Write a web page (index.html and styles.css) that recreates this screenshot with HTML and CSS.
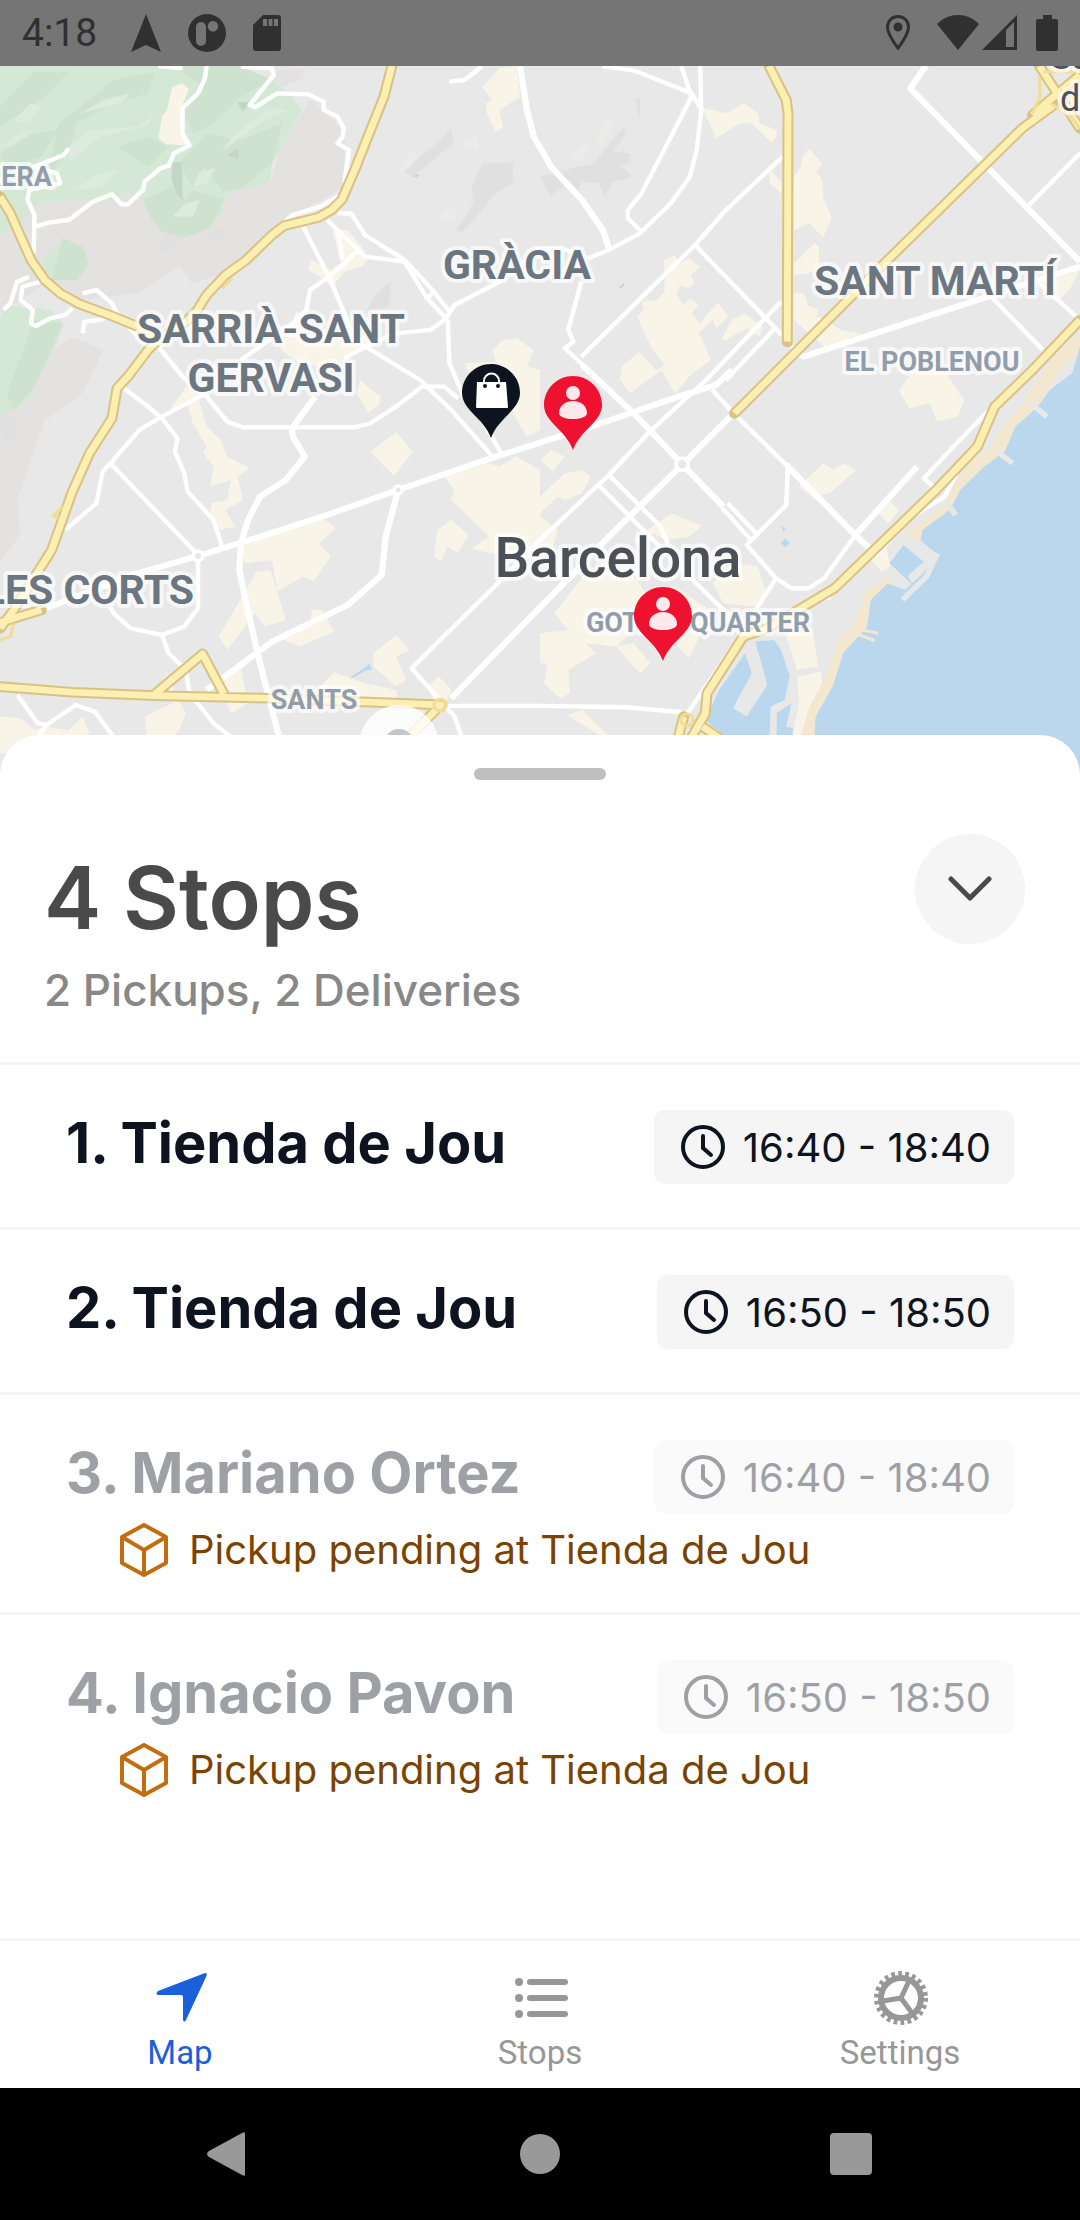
FILE: index.html
```html
<!DOCTYPE html>
<html lang="en">
<head>
<meta charset="utf-8">
<meta name="viewport" content="width=device-width, initial-scale=1">
<title>Stops</title>
<link rel="stylesheet" href="styles.css">
</head>
<body>
<header class="status">
  <time class="status-time">4:18</time>
  <div class="status-left">
    <svg width="30" height="38" viewBox="0 0 30 38"><path d="M15 0L30 38L15 31L0 38Z"/></svg>
    <svg width="38" height="38" viewBox="0 0 38 38"><path fill-rule="evenodd" d="M19 0a19 19 0 1 1 0 38a19 19 0 1 1 0-38ZM8 13v14a5 5 0 0 0 10 0V13a5 5 0 0 0-10 0ZM25 7a5 5 0 1 0 0 10.500a5 5 0 1 0 0-10.500Z"/></svg>
    <svg width="28" height="36" viewBox="0 0 28 36"><path fill-rule="evenodd" d="M10 0H25a3 3 0 0 1 3 3V33a3 3 0 0 1-3 3H3a3 3 0 0 1-3-3V10ZM10 4v7h4V4ZM15.500 4v7h4V4ZM21 4v7h4V4Z"/></svg>
  </div>
  <div class="status-right">
    <svg class="status-pin" width="24" height="36" viewBox="0 0 24 36"><path d="M12 1.500c-6 0-10.500 4.500-10.500 10.500C1.500 20 12 33 12 33S22.500 20 22.500 12C22.500 6 18 1.500 12 1.500Z" fill="none" stroke="#303030" stroke-width="3"/><circle cx="12" cy="12" r="4.500"/></svg>
    <svg width="42" height="36" viewBox="0 0 42 36"><path d="M0 9C12-3 30-3 42 9L21 35Z"/></svg>
    <svg width="35" height="36" viewBox="0 0 35 36"><path fill-rule="evenodd" d="M0 35L35 0V35ZM24 15V32H32V7Z"/></svg>
    <svg class="status-battery" width="22" height="36" viewBox="0 0 22 36"><path d="M7 0h9v4h4a2 2 0 0 1 2 2V34a2 2 0 0 1-2 2H2a2 2 0 0 1-2-2V6a2 2 0 0 1 2-2H7Z"/></svg>
  </div>
</header>

<svg class="map" viewBox="0 66 1080 709" preserveAspectRatio="xMidYMin slice" role="img" aria-label="Map of Barcelona">
  <rect y="66" width="1080" height="800" fill="#e8e8e8"/>
  <g transform="scale(.3444 .3333)">
    <g class="hill">
      <path d="M60 640L110 610L370 580L415 600L700 566L790 540L810 440L860 370L960 350L1000 400L1000 560L830 660L650 820L560 850L520 800L400 880L240 900L150 840L60 900L0 940V700Z"/>
      <path d="M790 240L800 210L885 204L880 235L820 260ZM860 370L900 300L960 350L940 420L860 480L820 500ZM0 1245L60 1220L140 1060L210 1010L300 1050L240 1180L130 1260L50 1500L60 1600L0 1690Z"/>
    </g>
    <g class="facet">
      <path d="M1165 505L1215 475L1275 425L1310 385L1315 430L1270 470L1235 500L1195 530ZM1370 560L1400 490L1490 488L1490 545L1430 590L1380 655L1340 698L1325 690L1375 610ZM1725 490L1810 380L1818 400L1780 455L1830 460V485L1798 500L1830 520L1830 535L1780 545L1755 590L1740 550L1690 545L1675 575L1655 540L1600 590L1568 530L1640 510ZM1843 300L1860 290L1858 360ZM1085 890L1135 840L1130 920L1065 930Z"/>
      <path d="M370 670L400 635L395 660ZM450 740L520 660L550 690L490 760ZM600 700L650 680L640 740ZM0 1240L45 1255L40 1330L0 1310Z"/>
    </g>
    <path class="facet-light" d="M1655 480L1710 420L1698 478ZM1738 400L1760 355L1780 375L1745 455ZM1150 525L1190 450L1218 470L1180 510ZM1275 640L1325 625L1320 655L1278 660ZM1340 430L1390 395L1388 450Z"/>
    <g class="park">
      <path d="M0 198H700L790 240L840 280L878 330L830 420L790 490L785 540L750 562L700 566L655 590L640 650L610 685L540 712L470 695L435 650L415 600L370 580L300 612L230 598L110 610L70 665L0 705Z"/>
      <path d="M182 713L240 740L257 790L220 840L140 843L122 780ZM0 950L20 915L150 930L183 970L160 1040L100 1160L60 1220L0 1245Z"/>
    </g>
    <path class="park-dark" d="M170 370L330 240L450 215L430 280L330 310L220 370L210 420L130 560L160 420ZM500 198H690L790 240L700 290L620 370L560 400L530 330L590 260ZM0 320L100 215L200 215L120 300L0 380ZM0 460L90 400L170 390L120 470L20 500ZM520 490L600 400L700 420L820 370L790 490L700 566L650 575L590 500L560 560ZM415 600L500 560L540 600L560 570L650 600L610 685L540 712L470 695L435 650ZM340 440L430 410L490 440L430 500ZM182 713L240 740L257 790L225 840L150 840ZM20 1180L100 960L183 970L100 1160L40 1230Z"/>
    <path class="park-light" d="M235 340L300 300L380 280L350 310ZM200 440L260 390L400 380L440 350L430 375L290 410L200 490ZM40 360L90 310L120 320L80 370ZM640 460L680 405L780 325L840 330L770 360L700 410ZM210 570L290 520L340 510L300 560ZM500 650L540 610L580 600L560 650ZM0 440L70 390L100 395L30 440ZM560 560L580 515L625 505L600 550Z"/>
    <path class="park-deep" d="M500 484L528 488L530 600L512 580L498 540ZM660 465L692 445V478ZM688 305H725L705 335Z"/>
    <g class="built">
      <path d="M500 260L530 250L548 268L528 320L530 400L550 437L480 432L460 415L470 350L485 330Z"/>
      <path d="M1450 205L1500 198L1510 290L1450 330L1460 385L1440 395L1415 345L1410 310L1430 300L1400 262ZM2040 325L2110 340L2160 310L2200 340L2205 370L2255 390L2255 410L2240 428L2180 366L2140 375L2080 415ZM2330 470L2350 447L2388 490L2370 515L2388 540L2390 590L2415 655L2390 712L2350 670L2305 690V530L2325 500ZM2235 510L2270 545V582L2235 550ZM2305 790L2365 730L2378 740L2378 800L2350 820L2305 825ZM2305 880L2335 880L2345 915L2375 930L2370 950L2395 955L2440 990L2500 1000L2400 1045L2370 1020L2305 960Z"/>
      <path d="M965 690L1010 690L1050 740L1068 780L1050 800L1000 815L965 860L930 830L895 810L905 780L960 810L990 790ZM860 935L880 940L900 1000L1060 1010L1070 1040L960 1105L870 1090L815 1050ZM1430 1050L1460 1020L1500 1015L1550 1050L1530 1100L1568 1110L1568 1290L1530 1310L1500 1260L1460 1180L1360 1120L1350 1090L1440 1085Z"/>
      <path d="M1928 780L1960 765L1975 790L2000 775L2033 800L2005 825L2018 850L2000 865L1975 855L1965 885L1985 915L2005 895L2028 915L2008 940L2030 970L2085 908L2115 950L2080 985L2068 960L2030 1000L2065 1080L2010 1120L1960 1180L1920 1110L1830 1180L1800 1140L1805 1100L1855 1055L1905 1110L1930 1095L1890 1040L1850 950L1870 925L1865 905L1905 900L1930 875ZM2095 1020L2125 960L2160 940L2215 980L2205 1010L2170 985L2140 1000L2110 1020Z"/>
      <path d="M485 1240L540 1160L575 1190L600 1280L640 1320L660 1370L725 1405L690 1430L705 1500L655 1530L682 1580L640 1590L610 1540L615 1510L660 1500L670 1440L610 1460L620 1400L590 1360L600 1340L560 1270L545 1215ZM1035 1180L1045 1140L1105 1190L1100 1215L1070 1237ZM1075 1355L1150 1298L1198 1355L1145 1428ZM700 1625L800 1600L930 1550L975 1585L925 1630L960 1670L910 1745L880 1730L805 1775L790 1680L710 1690ZM745 1715L785 1710L830 1860L770 1880L740 1840L660 1950L635 1910ZM800 1910L900 1880L905 1830L935 1830L970 1895L870 1940ZM1260 1670L1270 1590L1310 1560L1360 1605L1330 1660L1300 1640L1280 1685ZM1290 1430L1420 1390L1450 1400L1500 1370L1568 1410V1680L1420 1660L1370 1645L1420 1610L1310 1500L1320 1470Z"/>
      <path d="M1085 1960L1150 1905L1190 1950L1150 1970L1180 2040L1150 2060L1085 2000ZM1240 2060L1275 2030L1310 2070L1280 2140ZM930 2060L970 2018L1060 2050L1150 2070L1160 2130L930 2100ZM640 2060L700 1980L750 1960L700 2010L720 2110L670 2140ZM420 2150L500 2110L480 2010L510 2080L540 2140L520 2190L480 2240H430ZM0 2150L60 2155L100 2190L130 2180L200 2190L240 2150L260 2200L200 2260H0Z"/>
      <path d="M2610 1170L2640 1130L2600 1110H2740L2800 1200L2780 1250L2720 1265L2700 1210L2640 1225ZM1570 1380L1600 1350L1640 1370L1605 1415ZM1568 1490L1640 1420L1690 1410L1715 1430L1690 1480L1640 1500L1620 1490L1568 1540ZM1568 1550L1620 1590L1600 1660L1568 1670ZM1840 1620L1950 1540L2038 1578L2000 1610L1930 1620L1900 1600L1850 1640ZM2070 1750L2130 1690L2200 1700L2228 1790L2190 1820L2100 1810ZM1610 1840L1700 1720L1800 1700L1850 1740L1880 1790L1960 1760L2060 1830L2050 1870L2000 1975L1960 1930L1920 1900L1850 1880L1790 1940L1700 1930L1730 1960L1650 2010L1655 2080L1625 2095L1580 2050L1590 1990L1568 1990V1900L1650 1890ZM1790 1940L1840 1930L1888 1990L1860 2020L1830 1990ZM2320 1460L2390 1390L2420 1410L2450 1390L2485 1410L2410 1480L2370 1488L2415 1520V1535L2380 1510ZM2540 1530L2570 1490L2610 1530L2580 1570ZM2510 1660L2570 1620L2585 1700L2560 1715ZM2280 1900L2360 1890L2375 2000L2315 2010ZM2315 2030L2385 2015L2390 2090L2340 2210H2300L2320 2110ZM1645 2145L1690 2130L1765 2205H1740ZM3050 840L3136 810L3110 860L3070 910Z"/>
    </g>
    <path class="beach" d="M3136 1020L3070 1090L3030 1150L2990 1220L2930 1290L2890 1360L2830 1400L2790 1460L2755 1530L2690 1580L2640 1610M2590 1745L2530 1790L2500 1880L2450 1940L2410 2050L2368 2130L2340 2230"/>
    <g class="water">
      <path d="M3136 1040L3113 1120L3048 1170L3013 1220L2948 1280L2918 1355L2858 1400L2788 1470L2758 1530L2678 1590L2673 1620L2722 1665L2680 1720L2628 1770L2578 1750L2528 1800L2518 1880L2448 1960L2418 2060L2368 2150L2355 2400H3136Z"/>
      <path d="M2193 1925L2248 1920L2268 1950L2293 2030L2278 2100L2238 2120L2233 2240H2140L2048 2160L2088 2070L2163 1960L2183 2020L2128 2125L2168 2150L2228 2055ZM2255 2140L2298 2110L2283 2180L2303 2185L2298 2240H2255ZM2583 1690L2623 1635L2688 1690L2638 1730L2650 1755ZM2268 1630L2280 1615L2293 1630L2280 1642ZM2270 1580L2280 1585L2275 1595ZM1018 2032L1066 1998L1072 1990L1080 2010L1064 2010L1020 2036ZM1200 530L1205 522L1220 524L1210 532ZM1797 860L1812 850V858L1802 866Z"/>
    </g>
    <path class="pier" d="M2890 1350L2940 1390M2992 1210L3040 1250M2750 1510L2775 1545M2722 1660L2690 1730L2620 1800M2690 1690L2640 1735M2640 1620L2720 1670"/>
    <path class="beach thin" d="M2480 1885L2550 1900M2470 1895L2540 1922"/>
    <g class="road">
      <path d="M600 198L595 235L575 280L530 325V400L550 437L505 460L490 497L465 505L420 545L415 570L372 613H352L325 583L270 605L200 660L140 668L105 680M700 200L790 205L795 225L725 315L740 322L805 280L895 283L940 305V330L980 350L998 385L995 410L980 430L1013 450L1000 550M200 445L185 465L100 500L165 520L175 550L85 570L80 600L100 645L98 760M10 930L30 910L50 845L85 830M120 845L65 860L60 900L95 930L90 970L105 978L145 955L190 945L210 925M240 880L280 870L325 910L345 950L420 1030M240 1000L245 965L290 960L340 935M460 198L530 205"/>
      <path d="M800 690L850 645L930 620L990 585M880 680L955 830L1000 940L1030 1025L1070 1045L1220 1140L1310 1230L1430 1370M950 660L980 690L995 780M980 640L1020 640L1060 705L1175 780L1260 875L1305 935M980 690L1060 770L1175 785L1240 895L1300 960M1240 895L1265 870M1040 750L990 800L955 830L900 870L890 930L850 970L700 1080M1000 1075L1070 1035L1150 1000L1250 990L1290 960L1320 915L1460 840L1568 745H1630L1708 775M1300 960L1305 1090L1350 1200L1400 1260L1455 1360M460 1040L530 1130L600 1190L660 1265L705 1282H1030L1075 1270L1150 1220L1225 1160L1290 1160L1330 1195"/>
      <path d="M360 1165L430 1220L470 1255L515 1315L508 1355L535 1420L545 1475L620 1560L645 1640M590 1185L470 1250L405 1290L325 1385L298 1415L280 1510L190 1590M325 1395L575 1665V1825L535 1880L470 1905L380 1885L330 1840L310 1800M470 1905L490 1960L540 2010L550 2080L620 2170L700 2235M50 2085L110 2170L135 2175L220 2115L275 2135L350 2240M135 2175L100 2230"/>
      <path d="M1455 1740L1195 2005L1320 2150L1350 2240M1568 1820L1310 2095M1455 1740L1568 1620L1768 1425L1885 1297L2050 1140L2268 905M2108 1140L2250 985M1738 1455L2060 1790L2150 1880M1768 1425L1918 1580L1943 1640M2068 1170L2130 1240L2288 1400M2288 1390L2283 1515L2168 1635L2253 1735L2298 1765H2348L2393 1735L2488 1600M2253 1735L2188 1840M2098 1525L2180 1620M2113 1510L2200 1605M2968 1130L2768 1340L2683 1435L2710 1460M2778 1420L2743 1490L2648 1550L2540 1670M2128 1940L2023 2100L1990 2150M2410 1790L2300 1830M1300 2118H1568L1818 2122L1978 2137"/>
      <path d="M1748 198L1843 212L2008 280L2038 330M1978 198L2008 290L1863 580L1823 630V655L1858 690M2033 198L2036 330L2023 450L2003 530L1948 610L1858 700L1768 750L1708 775M2273 470L2108 630L2018 735L1688 1070M2018 735L2270 1005M1688 845L1650 990L1665 1025L1640 1045L1740 1140M1400 198L1350 240L1305 245M3136 460L2988 615M2878 890L3028 1050M3018 850L3136 960"/>
    </g>
    <g class="road wide">
      <path d="M120 1830L400 1720L575 1668L710 1625L955 1543L1155 1470L1440 1370L1568 1328L1745 1270L1970 1190L2080 1155L2125 1110M915 1190L848 1285L850 1310L885 1370L830 1440L755 1490L720 1560L700 1630L695 1710L715 1810L750 1970L815 2230M1155 1475L1120 1610L1108 1725L1010 1815L790 1925L600 2070M1310 2095L1670 1715L1768 1610L1975 1400L2130 1240M1690 1095L1840 1240L1981 1393L2100 1520M2288 1400L2488 1610L2530 1650M2488 1600L2663 1400"/>
      <path d="M1510 198L1530 330L1550 410L1600 500L1690 600L1750 690L1770 750M2688 198L2643 265L2818 450L3136 785M2300 1040L2333 1070L2868 890L3136 800"/>
    </g>
    <circle class="ring" cx="1981" cy="1393" r="18"/>
    <circle class="ring" cx="575" cy="1668" r="14"/>
    <circle class="ring" cx="1156" cy="1470" r="12"/>
    <g class="highway casing">
      <path d="M0 590L30 640L60 710L90 780L130 840L175 880L230 912L330 950L400 980L450 1015M1138 198L1115 290L1070 405L1030 510L993 598L965 628L925 652L825 677L790 705L715 780L655 825L600 885L570 935L540 965L460 1020L430 1050L375 1125L340 1165L325 1255L260 1360L210 1475L150 1650L95 1740L40 1830L0 1885M0 1868L120 1830M0 2060L210 2077L450 2087L780 2095L1280 2115L1180 2220M450 2082L588 1962L650 2082"/>
      <path d="M2233 198L2283 300L2288 340L2286 1025M3060 315L2968 385L2558 800L2133 1240M3018 198L3136 385M3136 225L3060 290L2998 345M3136 960L2998 1110L2888 1220L2838 1340L2718 1470L2498 1690L2423 1765L2228 1885L2158 1910L2053 2080L2048 2140L1998 2230M1985 2150L1965 2230M2040 2180L2110 2230"/>
    </g>
    <g class="highway">
      <path d="M0 590L30 640L60 710L90 780L130 840L175 880L230 912L330 950L400 980L450 1015M1138 198L1115 290L1070 405L1030 510L993 598L965 628L925 652L825 677L790 705L715 780L655 825L600 885L570 935L540 965L460 1020L430 1050L375 1125L340 1165L325 1255L260 1360L210 1475L150 1650L95 1740L40 1830L0 1885M0 1868L120 1830M0 2060L210 2077L450 2087L780 2095L1280 2115L1180 2220M450 2082L588 1962L650 2082"/>
      <path d="M2233 198L2283 300L2288 340L2286 1025M3060 315L2968 385L2558 800L2133 1240M3018 198L3136 385M3136 225L3060 290L2998 345M3136 960L2998 1110L2888 1220L2838 1340L2718 1470L2498 1690L2423 1765L2228 1885L2158 1910L2053 2080L2048 2140L1998 2230M1985 2150L1965 2230M2040 2180L2110 2230"/>
    </g>
    <g class="ramp">
      <path d="M3018 230L3020 290L2998 340M3050 310L3110 350L3136 385M3080 270L3136 310M3030 215L3136 215M0 1920L30 1910L40 1870M180 1520L155 1548L170 1555M675 835L645 865"/>
      <circle cx="1278" cy="2115" r="18"/>
      <circle cx="1995" cy="2160" r="18"/>
    </g>
  </g>

  <circle cx="399" cy="745" r="40" fill="#fff" fill-opacity=".8"/>
  <circle cx="399" cy="744" r="15" fill="#c4c6c7"/>

  <g class="label city"><text x="618" y="577">Barcelona</text></g>
  <g class="label district">
    <text x="517" y="279">GRÀCIA</text>
    <text x="271" y="343">SARRIÀ-SANT</text>
    <text x="271" y="392">GERVASI</text>
    <text x="935" y="295">SANT MARTÍ</text>
    <text class="ends" x="194" y="604">LES CORTS</text>
  </g>
  <g class="label quarter">
    <text x="932" y="371">EL POBLENOU</text>
    <text x="698" y="632">GOTHIC QUARTER</text>
    <text x="314" y="709">SANTS</text>
    <text class="ends" x="52" y="186">VALLVIDRERA</text>
  </g>
  <g class="label town">
    <text x="1050" y="69">Santa Coloma</text>
    <text x="1060" y="111">de Gramenet</text>
  </g>

  <g transform="translate(462 364)">
    <path d="M29 0C13 0 0 13 0 29C0 46 22 54 29 74C36 54 58 46 58 29C58 13 45 0 29 0Z" fill="#0d131f"/>
    <path d="M15 18H44L46 43Q46 44 45 44H15Q14 44 14 43Z" fill="#fff"/>
    <path d="M22 21V17A7 7 0 0 1 37 17V21" fill="none" stroke="#fff" stroke-width="2"/>
    <circle cx="23" cy="22" r="2" fill="#0d131f"/><circle cx="36" cy="22" r="2" fill="#0d131f"/>
  </g>
  <g transform="translate(544 376)">
    <path d="M29 0C13 0 0 13 0 29C0 46 22 54 29 74C36 54 58 46 58 29C58 13 45 0 29 0Z" fill="#ef1230"/>
    <circle cx="29" cy="17" r="7" fill="#fde8eb"/>
    <path d="M15 37C15 30 21 25 29 25S43 30 43 37C43 41 36 43 29 43S15 41 15 37Z" fill="#fde8eb"/>
  </g>
  <g transform="translate(634 587)">
    <path d="M29 0C13 0 0 13 0 29C0 46 22 54 29 74C36 54 58 46 58 29C58 13 45 0 29 0Z" fill="#ef1230"/>
    <circle cx="29" cy="17" r="7" fill="#fde8eb"/>
    <path d="M15 37C15 30 21 25 29 25S43 30 43 37C43 41 36 43 29 43S15 41 15 37Z" fill="#fde8eb"/>
  </g>
</svg>

<main class="sheet">
  <div class="handle"></div>
  <div class="sheet-head">
    <div>
      <h1>4 Stops</h1>
      <p>2 Pickups, 2 Deliveries</p>
    </div>
    <button class="collapse" type="button" aria-label="Collapse">
      <svg width="44" height="26" viewBox="0 0 44 26"><path d="M3 3L22 22L41 3" fill="none" stroke="#4a4a4a" stroke-width="5" stroke-linecap="round" stroke-linejoin="round"/></svg>
    </button>
  </div>
  <ol class="stops">
    <li class="stop">
      <div class="stop-row">
        <h2>1. Tienda de Jou</h2>
        <span class="slot"><svg width="44" height="44" viewBox="0 0 44 44"><circle cx="22" cy="22" r="20"/><path d="M22 11V23L30 30"/></svg>16:40 - 18:40</span>
      </div>
    </li>
    <li class="stop">
      <div class="stop-row">
        <h2>2. Tienda de Jou</h2>
        <span class="slot"><svg width="44" height="44" viewBox="0 0 44 44"><circle cx="22" cy="22" r="20"/><path d="M22 11V23L30 30"/></svg>16:50 - 18:50</span>
      </div>
    </li>
    <li class="stop">
      <div class="stop-row waiting">
        <h2>3. Mariano Ortez</h2>
        <span class="slot"><svg width="44" height="44" viewBox="0 0 44 44"><circle cx="22" cy="22" r="20"/><path d="M22 11V23L30 30"/></svg>16:40 - 18:40</span>
      </div>
      <p class="pending"><svg width="48" height="54" viewBox="0 0 48 54"><path d="M24 2L46 14V40L24 52L2 40V14ZM2 14L24 27L46 14M24 27V52"/></svg>Pickup pending at Tienda de Jou</p>
    </li>
    <li class="stop">
      <div class="stop-row waiting">
        <h2>4. Ignacio Pavon</h2>
        <span class="slot"><svg width="44" height="44" viewBox="0 0 44 44"><circle cx="22" cy="22" r="20"/><path d="M22 11V23L30 30"/></svg>16:50 - 18:50</span>
      </div>
      <p class="pending"><svg width="48" height="54" viewBox="0 0 48 54"><path d="M24 2L46 14V40L24 52L2 40V14ZM2 14L24 27L46 14M24 27V52"/></svg>Pickup pending at Tienda de Jou</p>
    </li>
  </ol>
</main>

<nav class="tabs">
  <a class="tab active" href="#map"><svg width="56" height="56" viewBox="0 0 56 56"><path d="M53 3Q56 3 54 7L34 50Q32 53 31 50V27Q31 25 29 25H6Q3 24 6 21Z"/></svg>Map</a>
  <a class="tab" href="#stops"><svg width="56" height="56" viewBox="-2 0 56 56"><circle cx="5" cy="12" r="4"/><circle cx="5" cy="28" r="4"/><circle cx="5" cy="44" r="4"/><path d="M16 12H51M16 28H51M16 44H51" fill="none" stroke="#979797" stroke-width="6" stroke-linecap="round"/></svg>Stops</a>
  <a class="tab" href="#settings"><svg width="56" height="56" viewBox="-29 -28 56 56"><g fill="none" stroke="#979797"><circle r="20" stroke-width="6"/><circle r="24.500" stroke-width="5" stroke-dasharray="3.700 3.297"/><path d="M0 0L8 -17M0 0L-18 3M0 0L11 15" stroke-width="5"/></g></svg>Settings</a>
</nav>

<footer class="system">
  <button type="button" aria-label="Back"><svg width="42" height="46" viewBox="0 0 42 46"><path d="M39 3V43Q39 46 36 44L3 26Q-1 23 3 20L36 2Q39 0 39 3Z"/></svg></button>
  <button type="button" aria-label="Home"><svg width="42" height="42" viewBox="0 0 42 42"><circle cx="22" cy="21" r="20"/></svg></button>
  <button type="button" aria-label="Recents"><svg width="42" height="42" viewBox="0 0 42 42"><rect width="42" height="42" rx="4"/></svg></button>
</footer>
</body>
</html>
```
FILE: styles.css
```css
* { box-sizing: border-box; }
body {
  margin: 0;
  min-height: 100vh;
  display: flex;
  flex-direction: column;
  background: #fff;
  font-family: Inter, "Liberation Sans", sans-serif;
  color: #0d131f;
}
h1, h2, p, ol { margin: 0; padding: 0; }
button { border: 0; padding: 0; }
svg { display: block; flex: none; }

.status {
  height: 66px;
  padding: 0 22px;
  display: flex;
  align-items: center;
  background: #757575;
  color: #303030;
  font-family: Roboto, sans-serif;
}
.status svg { fill: #303030; }
.status-time { font-size: 39px; margin-right: 34px; }
.status-left, .status-right { display: flex; align-items: center; }
.status-left { gap: 27px; }
.status-right { margin-left: auto; gap: 3px; }
.status-pin { margin-right: 24px; }
.status-battery { margin-left: 16px; }

.map { width: 100%; flex: 1 1 0; min-height: 400px; }
.hill { fill: #e4e2e1; }
.facet { fill: #e0e0e0; }
.facet-light { fill: #ebebe9; }
.park { fill: #d5e8d6; }
.park-dark { fill: #cfe2d0; }
.park-light { fill: #dcebdd; }
.park-deep { fill: #c4d6c6; }
.built { fill: #f8f4e7; }
.water { fill: #bad7ed; }
.beach { fill: none; stroke: #f3e8cf; stroke-width: 40; }
.beach.thin { stroke-width: 9; }
.pier { fill: none; stroke: #e8e8e8; stroke-width: 16; }
.road { fill: none; stroke: #fff; stroke-width: 13; stroke-linejoin: round; }
.road.wide { stroke-width: 18; }
.ring { fill: #e8e8e8; stroke: #fff; stroke-width: 10; }
.highway { fill: none; stroke: #fbf0b2; stroke-width: 20; stroke-linejoin: round; }
.highway.casing { stroke: #d9c283; stroke-width: 32; stroke-linecap: round; }
.ramp { fill: none; stroke: #f3dc93; stroke-width: 9; }
.label {
  font-family: Roboto, sans-serif;
  text-anchor: middle;
  paint-order: stroke;
  stroke: #fff;
  stroke-opacity: .7;
  stroke-width: 8px;
  stroke-linejoin: round;
}
.label .ends { text-anchor: end; }
.city { font-size: 55px; font-weight: 500; fill: #4c5157; }
.district { font-size: 41px; font-weight: 700; fill: #6b7680; }
.quarter { font-size: 27px; font-weight: 700; fill: #929dab; }
.town { font-size: 36px; fill: #4c5157; text-anchor: start; }

.sheet {
  position: relative;
  margin-top: -40px;
  padding: 33px 0 106px;
  background: #fff;
  border-radius: 40px 40px 0 0;
}
.handle {
  width: 132px;
  height: 12px;
  margin: 0 auto;
  border-radius: 6px;
  background: #bfbfbf;
}
.sheet-head {
  display: flex;
  justify-content: space-between;
  align-items: flex-start;
  padding: 54px 55px 44px 44px;
}
h1 { font-size: 86px; line-height: 128px; font-weight: 600; color: #4a4a4a; }
.sheet-head p { font-size: 44px; line-height: 56px; font-weight: 500; color: #888; }
.collapse {
  width: 110px;
  height: 110px;
  border-radius: 50%;
  background: #f5f5f5;
  display: grid;
  place-items: center;
}
.stops { list-style: none; }
.stop {
  border-top: 3px solid #f5f5f5;
  padding: 45px 66px 43px;
}
.stop-row { display: flex; justify-content: space-between; align-items: flex-start; }
h2 { font-size: 56px; line-height: 66px; font-weight: 700; }
.slot {
  display: flex;
  align-items: center;
  gap: 18px;
  height: 74px;
  padding: 0 23px 0 27px;
  border-radius: 11px;
  background: #f5f5f5;
  font-size: 40px;
}
.slot svg { fill: none; stroke: #0d131f; stroke-width: 4; stroke-linecap: round; }
.waiting { opacity: .4; }
.pending {
  display: flex;
  align-items: center;
  gap: 21px;
  height: 55px;
  padding-left: 54px;
  margin-top: 8px;
  margin-bottom: -8px;
  font-size: 40px;
  color: #7b4300;
}
.pending svg { fill: none; stroke: #c26d0f; stroke-width: 4; stroke-linejoin: round; }

.tabs {
  display: grid;
  grid-template-columns: repeat(3, 1fr);
  height: 150px;
  padding-top: 29px;
  border-top: 3px solid #f5f5f5;
  background: #fff;
}
.tab {
  display: flex;
  flex-direction: column;
  align-items: center;
  gap: 7px;
  font: 33px/40px Roboto, sans-serif;
  color: #979797;
  fill: #979797;
  text-decoration: none;
}
.tab.active { color: #1a60da; fill: #1a60da; }
.system {
  height: 132px;
  padding: 0 208px 0 206px;
  display: flex;
  justify-content: space-between;
  align-items: center;
  background: #000;
}
.system button { background: none; }
.system svg { fill: #999; }
```
